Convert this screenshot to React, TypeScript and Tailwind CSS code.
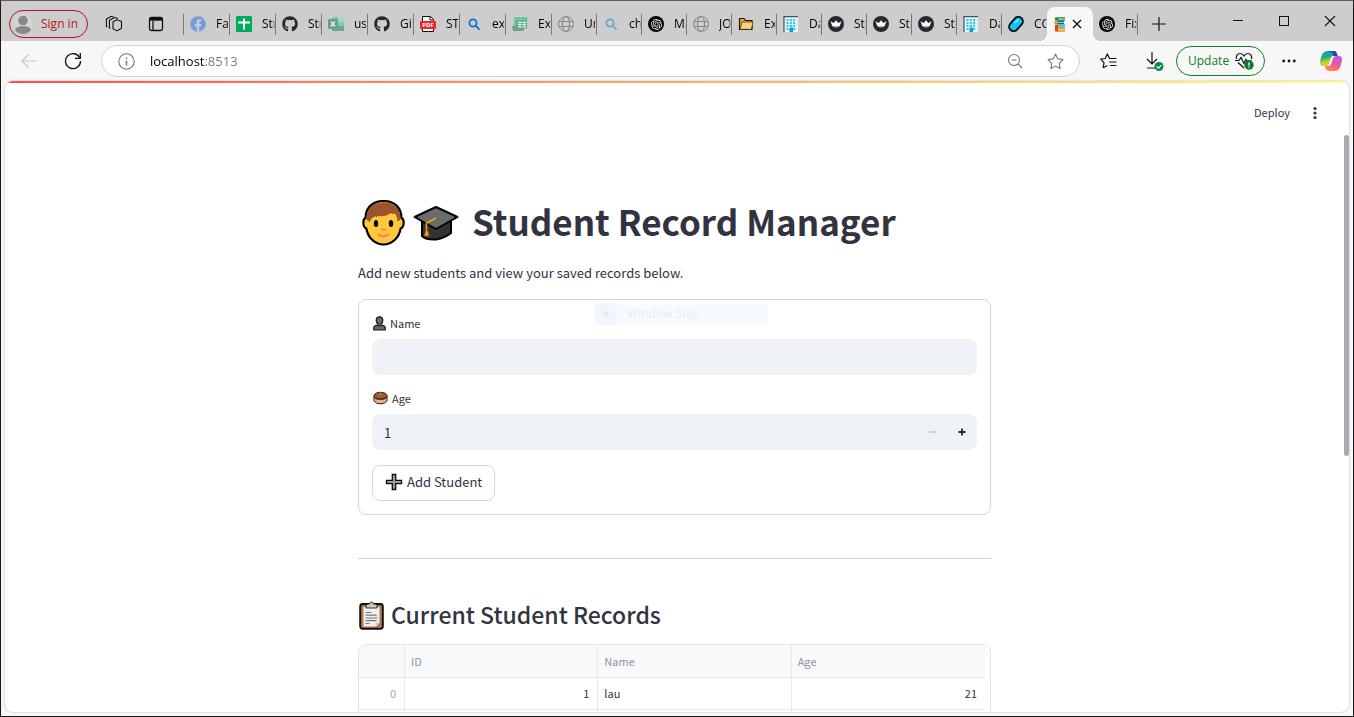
import React, { useState } from 'react';
import { FaFacebook, FaGithub } from 'react-icons/fa';
import { SiOpenai } from 'react-icons/si';

const ui = "font-['Open_Sans','Noto_Sans',sans-serif]";
const app = "font-['Noto_Sans_CJK_SC','Open_Sans',sans-serif]";

function Sheets() {
  return (
    <svg width="16" height="16" viewBox="0 0 16 16" aria-hidden="true">
      <rect width="16" height="16" rx="1" fill="#00ac5b" />
      <path d="M2 6.5h12M8 2.5v11" stroke="#fff" strokeWidth="2" />
    </svg>
  );
}

function Excel() {
  return (
    <svg width="16" height="16" viewBox="0 0 16 16" opacity="0.65" aria-hidden="true">
      <path d="M4 1h12v14H4z" fill="#5fc79a" />
      <path d="M10 1h6v5h-6z" fill="#8fe0bd" />
      <path d="M4 10h12v5H4z" fill="#3c8f68" />
      <rect x="0" y="3" width="10" height="10" rx="1" fill="#2f8a5d" />
      <path d="M3 5.5l4 5M7 5.5l-4 5" stroke="#fff" strokeWidth="1.4" />
    </svg>
  );
}

function Pdf() {
  return (
    <svg width="16" height="16" viewBox="0 0 16 16" aria-hidden="true">
      <path d="M2.5.5h8l3 3v12h-11z" fill="#fff" stroke="#111" />
      <path d="M10 .5V4h3.5" fill="none" stroke="#111" />
      <rect x="0" y="5" width="16" height="8" rx="1" fill="#f8202c" />
      <text x="8" y="11.2" fontSize="6" fontWeight="700" textAnchor="middle" fill="#fff" fontFamily="Open Sans">PDF</text>
    </svg>
  );
}

function Lens({ color }: { color: string }) {
  return (
    <svg width="16" height="16" viewBox="0 0 16 16" fill="none" stroke={color} strokeWidth="1.8" aria-hidden="true">
      <circle cx="7" cy="7" r="3.6" />
      <path d="M9.6 9.6l3.500 3.500" strokeLinecap="round" />
    </svg>
  );
}

function FormSheet() {
  return (
    <svg width="16" height="16" viewBox="0 0 16 16" aria-hidden="true">
      <path d="M2.5 1H15.500l-1 11H1.500z" fill="#6cc4a1" />
      <path d="M0 10h13l-1.500 5H1z" fill="#7d9c8a" />
      <rect x="4.500" y="4.500" width="10.500" height="8" fill="#5aa982" />
      <path d="M6 6.500h3.500M10.500 6.500H14M6 8.700h3.500M10.500 8.700H14M6 10.900h3.500M10.500 10.900H14" stroke="#e9fff5" strokeWidth="1.3" />
    </svg>
  );
}

function Globe() {
  return (
    <svg width="16" height="16" viewBox="0 0 16 16" fill="none" stroke="#858585" aria-hidden="true">
      <circle cx="8" cy="8" r="7.4" />
      <ellipse cx="8" cy="8" rx="3.6" ry="7.4" />
      <path d="M1 5.5h14M1 10.5h14" />
    </svg>
  );
}

function OpenAI() {
  return (
    <span className="flex size-4 items-center justify-center rounded-full bg-black text-white">
      <SiOpenai size={11} />
    </span>
  );
}

function Folder() {
  return (
    <svg width="16" height="16" viewBox="0 0 16 16" aria-hidden="true">
      <path d="M1.500 13.500v-11h4.500l1.500 2h6.500v9z" fill="#e8a92c" stroke="#1c1408" strokeWidth="1.200" strokeLinejoin="round" />
      <path d="M2 13.300L4 6h11l-1.600 7.300z" fill="#ffd277" stroke="#3a2a08" strokeWidth=".7" />
    </svg>
  );
}

function Building() {
  return (
    <svg width="16" height="16" viewBox="0 0 16 16" aria-hidden="true">
      <rect x="1" y=".5" width="14" height="15.500" fill="#eef1f3" />
      <path d="M.5.700h14.500M1 .5V16" stroke="#18384a" strokeWidth="1" />
      <path d="M3.500 4h10M3.500 7h10M3.500 10h10M3.500 13h10" stroke="#12d0fb" strokeWidth="2" strokeDasharray="2 1.300" />
      <path d="M6.500 16v-4.500h3.500V16z" fill="#0a9fd0" />
    </svg>
  );
}

function Crown() {
  return (
    <svg width="16" height="16" viewBox="0 0 16 16" aria-hidden="true">
      <circle cx="8" cy="8" r="8" fill="#262730" />
      <path d="M2.500 5.300l3.200 1.800L8 4.300l2.300 2.800 3.200-1.800-1.700 4.400Q8 11.200 4.200 9.700z" fill="#fff" />
      <path d="M4.200 9.700Q8 11.200 11.800 9.700l-.5 1.100Q8 12 4.700 10.800z" fill="#c4c4c8" />
    </svg>
  );
}

function Capsule() {
  return (
    <svg width="16" height="16" viewBox="0 0 16 16" aria-hidden="true">
      <rect x="0" y="3.500" width="16" height="9" rx="4.500" transform="rotate(-48 8 8)" fill="#0fc3fb" stroke="#06141f" strokeWidth="2" />
      <path d="M7 6.500l3-2.500" stroke="#8defff" strokeWidth="1.600" strokeLinecap="round" />
    </svg>
  );
}

function Books() {
  return (
    <svg width="16" height="16" viewBox="0 0 16 16" aria-hidden="true">
      <path d="M4 2.800h8M3 6.400h9M4 10h8M4 13.600h8" stroke="#e4ecec" strokeWidth="2" />
      <path d="M13 1.800H5M5 4.200h8" stroke="#16873f" strokeWidth="1.300" />
      <path d="M12 5.600H4M4 7.600h8" stroke="#1d5f94" strokeWidth="1.200" />
      <path d="M13 9.200H5M5 11.200h8" stroke="#1fa59b" strokeWidth="1.200" />
      <path d="M13 12.900H5M5 15h8" stroke="#e9981b" strokeWidth="1.300" />
      <path d="M4.500 1.500v3" stroke="#16873f" strokeWidth="3" />
      <path d="M4 5v3.500" stroke="#e9981b" strokeWidth="3" />
      <path d="M4.500 9v6.500" stroke="#ef3d1c" strokeWidth="3" />
    </svg>
  );
}

type TabItem = { icon: React.ReactNode; label: string; wide?: boolean };

const tabs: TabItem[] = [
  { icon: <FaFacebook size={16} color="#769ce0" />, label: 'Fac', wide: true },
  { icon: <Sheets />, label: 'Str', wide: true },
  { icon: <FaGithub size={16} color="#24292f" />, label: 'Str', wide: true },
  { icon: <Excel />, label: 'us', wide: true },
  { icon: <FaGithub size={16} color="#24292f" />, label: 'Git', wide: true },
  { icon: <Pdf />, label: 'ST', wide: true },
  { icon: <Lens color="#0f77c9" />, label: 'ex', wide: true },
  { icon: <FormSheet />, label: 'Exc', wide: true },
  { icon: <Globe />, label: 'Un' },
  { icon: <Lens color="#6ba6cd" />, label: 'ch' },
  { icon: <OpenAI />, label: 'Ma' },
  { icon: <Globe />, label: 'JO' },
  { icon: <Folder />, label: 'Ex' },
  { icon: <Building />, label: 'Da' },
  { icon: <Crown />, label: 'Str' },
  { icon: <Crown />, label: 'Str' },
  { icon: <Crown />, label: 'Str' },
  { icon: <Building />, label: 'Da' },
];

function Tab({ item, last = true }: { item: TabItem; last?: boolean }) {
  return (
    <button
      aria-label={item.label}
      className={`flex h-[21px] shrink-0 items-center overflow-hidden pl-[6px] ${item.wide ? 'w-[46px]' : 'w-[45px]'} ${last ? 'border-r border-[#777]' : ''}`}
    >
      <span className="shrink-0">{item.icon}</span>
      <span className="ml-[10px] w-3 grow overflow-hidden whitespace-nowrap text-left text-[12px] leading-[18px] [mask-image:linear-gradient(to_right,#000_85%,transparent)]">
        {item.label}
      </span>
    </button>
  );
}

function TabStrip() {
  return (
    <div className="flex h-10 shrink-0 items-center bg-[#cdcdcd] text-black">
      <button className="ml-2 mt-1.5 flex h-7 w-[79px] shrink-0 items-center gap-2 rounded-full border border-[#b8161c] pl-[3px] text-[12px] text-[#b8161c]">
        <svg width="20" height="20" viewBox="0 0 20 20" aria-hidden="true">
          <circle cx="10" cy="10" r="10" fill="#d8d4d2" />
          <circle cx="10" cy="6.500" r="4.800" fill="#8a8886" />
          <path d="M2 16q1-4 8-4t8 4q-3 4-8 4t-8-4z" fill="#8a8886" />
        </svg>
        <span className="whitespace-nowrap">Sign in</span>
      </button>
      <button aria-label="Workspaces" className="ml-[17px] mt-1.5 shrink-0">
        <svg width="18" height="18" viewBox="0 0 18 18" fill="none" stroke="#111" strokeWidth="1.100" strokeLinejoin="round" strokeLinecap="round" aria-hidden="true">
          <path d="M8 7.200q0-.5.500-.7l3.300-1.400q.7-.3 1.300 0L16.500 6.600v6.200q0 .6-.5.900l-3.700 1.900q-.5.300-1 0L8 13.700z" />
          <path d="M5 13.300l-.6-.4V5.800q0-.6.500-.9L9.300 2.700q.6-.3 1.200 0l2 .9" />
          <path d="M2 12l-.6-.4V4.600q0-.6.500-.9L6 1.500q.6-.3 1.200 0l1 .4" />
        </svg>
      </button>
      <button aria-label="Tab actions" className="ml-[25px] mt-1.5 shrink-0">
        <svg width="16" height="16" viewBox="0 0 16 16" fill="none" stroke="#111" strokeWidth="1.300" aria-hidden="true">
          <rect x="1.500" y="1.500" width="13" height="13" rx="2.200" />
          <path d="M1.500 3.200h13" strokeWidth="3" />
          <path d="M5 5v9.500" />
        </svg>
      </button>
      <div className="ml-[19px] mt-1.5 flex h-[34px] shrink-0 items-center">
        <span className="h-[21px] w-px bg-[#777]" />
        {tabs.map((t, i) => (
          <Tab key={i} item={t} />
        ))}
        <Tab item={{ icon: <Capsule />, label: 'CO' }} last={false} />
        <div className="relative flex h-[34px] w-[46px] shrink-0 items-center rounded-t-lg bg-[#f7f7f7] pl-[5px]">
          <span className="absolute -left-2 bottom-0 size-2 bg-[radial-gradient(circle_at_0_0,transparent_8px,#f7f7f7_8px)]" />
          <span className="absolute -right-2 bottom-0 size-2 bg-[radial-gradient(circle_at_100%_0,transparent_8px,#f7f7f7_8px)]" />
          <Books />
          <button aria-label="Close tab" className="p-1">
            <svg width="10" height="10" viewBox="0 0 10 10" stroke="#111" strokeWidth="1.400" aria-hidden="true">
              <path d="M1 1l8 8M9 1L1 9" />
            </svg>
          </button>
        </div>
        <Tab item={{ icon: <OpenAI />, label: 'Fix' }} />
      </div>
      <button aria-label="New tab" className="ml-[13px] mt-1.5 shrink-0">
        <svg width="16" height="16" viewBox="0 0 16 16" stroke="#111" strokeWidth="1.200" aria-hidden="true">
          <path d="M8 1v14M1 8h14" />
        </svg>
      </button>
      <div className="ml-auto mr-[17px] flex shrink-0 items-center gap-[34px]">
        <button aria-label="Minimize">
          <svg width="12" height="12" viewBox="0 0 12 12" stroke="#111" aria-hidden="true"><path d="M1 5.500h10" /></svg>
        </button>
        <button aria-label="Maximize">
          <svg width="12" height="12" viewBox="0 0 12 12" fill="none" stroke="#111" aria-hidden="true"><rect x="1.500" y="1.500" width="9" height="9" /></svg>
        </button>
        <button aria-label="Close window">
          <svg width="12" height="12" viewBox="0 0 12 12" stroke="#111" strokeWidth="1.100" aria-hidden="true"><path d="M1 1l10 10M11 1L1 11" /></svg>
        </button>
      </div>
    </div>
  );
}

function Toolbar() {
  return (
    <div className="flex h-10 shrink-0 items-center pr-[11px]">
      <button aria-label="Back" className="ml-5 shrink-0">
        <svg width="16" height="16" viewBox="0 0 16 16" fill="none" stroke="#c6c6c6" strokeWidth="1.100" aria-hidden="true">
          <path d="M15.500 8H.8M7.500 1.500L1 8l6.500 6.500" />
        </svg>
      </button>
      <button aria-label="Refresh" className="ml-[27px] shrink-0">
        <svg width="18" height="18" viewBox="0 0 18 18" fill="none" stroke="#111" strokeWidth="1.300" aria-hidden="true">
          <path d="M15.800 6A7.500 7.500 0 1 0 16.500 9" />
          <path d="M16.300 1v5.300H11" />
        </svg>
      </button>
      <div className="ml-[19px] flex h-8 grow items-center rounded-full border border-[#d2d2d2] bg-white pl-4 pr-[15px]">
        <svg width="17" height="17" viewBox="0 0 17 17" fill="none" stroke="#767676" strokeWidth="1.100" aria-hidden="true">
          <circle cx="8.500" cy="8.500" r="7.700" />
          <path d="M8.500 7.500v5M8.500 4.500v1.500" strokeWidth="1.500" />
        </svg>
        <input
          id="address"
          aria-label="Address"
          defaultValue="localhost:8513"
          className="ml-[15px] h-6 min-w-0 grow bg-[linear-gradient(to_right,#000_55px,#777_55px)] bg-clip-text text-[13px] leading-6 text-transparent caret-black outline-none"
        />
        <button aria-label="Zoom" className="shrink-0">
          <svg width="16" height="16" viewBox="0 0 16 16" fill="none" stroke="#777" strokeWidth="1.100" aria-hidden="true">
            <circle cx="7" cy="7" r="5.500" />
            <path d="M11 11l4 4M4.500 7h5" />
          </svg>
        </button>
        <button aria-label="Favorite this page" className="ml-6 shrink-0">
          <svg width="17" height="17" viewBox="0 0 24 24" fill="none" stroke="#777" strokeWidth="1.500" strokeLinejoin="round" aria-hidden="true">
            <path d="M12 1.500l3.200 6.800 7.300 1-5.300 5.200 1.300 7.500L12 18.500 5.500 22l1.300-7.500L1.500 9.300l7.300-1z" />
          </svg>
        </button>
      </div>
      <button aria-label="Favorites" className="ml-5 shrink-0">
        <svg width="17" height="17" viewBox="0 0 17 17" fill="none" stroke="#111" strokeWidth="1.200" strokeLinejoin="round" aria-hidden="true">
          <path d="M10.500 5.500l-1-.2L7.300 1 5.200 5.500.7 6.200l3.300 3.400-.8 5.100 4.100-2.200" />
          <path d="M10 5.500h6.500M9 9h7.500M10 12.500h6.500" />
        </svg>
      </button>
      <button aria-label="Downloads" className="ml-[29px] shrink-0">
        <svg width="18" height="20" viewBox="0 0 18 20" fill="none" stroke="#111" strokeWidth="1.200" aria-hidden="true">
          <path d="M6 1v12M1 8l5 5 5-5M1 17h9" />
          <circle cx="13" cy="15.500" r="4.500" fill="#0e8a44" stroke="none" />
          <path d="M10.800 15.500l1.700 1.700 2.800-3" stroke="#fff" />
        </svg>
      </button>
      <button className="ml-3 flex h-[30px] w-[89px] shrink-0 items-center rounded-full border border-[#0f8025] pl-[11px] text-[12px] text-[#0f8025]">
        Update
        <svg className="ml-1.5" width="20" height="18" viewBox="0 0 20 18" fill="none" stroke="#111" strokeWidth="1.200" aria-hidden="true">
          <path d="M1.700 7C.500 4 2.500 1.500 5 1.500 7.500 1.500 8.600 3.300 9 4 9.400 3.300 10.500 1.500 13 1.500S17.500 4 16.300 7M3 10.500l6 5.500" />
          <path d="M0 8.500h4l2-3 3 6 2-4 1 1.500h5" />
          <circle cx="14" cy="13" r="4.700" fill="#0f7a25" stroke="none" />
          <path d="M14 10.500v3.200M14 14.500v1.200" stroke="#fff" strokeWidth="1.300" />
        </svg>
      </button>
      <button aria-label="Settings and more" className="ml-[17px] shrink-0">
        <svg width="14" height="4" viewBox="0 0 14 4" fill="#111" aria-hidden="true">
          <circle cx="1.700" cy="2" r="1.400" /><circle cx="7" cy="2" r="1.400" /><circle cx="12.300" cy="2" r="1.400" />
        </svg>
      </button>
      <button aria-label="Copilot" className="ml-6 shrink-0">
        <svg width="22" height="20" viewBox="0 0 22 20" aria-hidden="true">
          <defs>
            <linearGradient id="cpA" x1="0" y1="0" x2="0.300" y2="1">
              <stop offset="0" stopColor="#12a6ea" /><stop offset=".45" stopColor="#22a77a" /><stop offset=".75" stopColor="#b8d338" /><stop offset="1" stopColor="#ffbe2e" />
            </linearGradient>
            <linearGradient id="cpB" x1="0.800" y1="0" x2="0.200" y2="1">
              <stop offset="0" stopColor="#b05cf0" /><stop offset=".5" stopColor="#f2569a" /><stop offset="1" stopColor="#ff8d45" />
            </linearGradient>
          </defs>
          <path d="M8 0h6q2 0 2.700 2l1 3h-4q-2 0-2.700 2l-2 6q-.7 2-3 2H3Q0 15 0 11.500q0-2 1.500-6.500Q3 0 8 0z" fill="url(#cpA)" />
          <path d="M7 0h7q2 0 2.700 2l1 3h-4L12 1.500z" fill="#1848c8" />
          <path d="M14 20H9q-2.500 0-3.200-2l-1-3H8q2 0 2.700-2l2-6q.7-2 3-2H19q3 0 3 3.500 0 2-1.500 6.500Q19 20 14 20z" fill="url(#cpB)" />
          <path d="M9 13.500L11.200 7q.7-2 2.800-2h1.500q-1.800 0-2.500 2l-2 6q-.7 2-2.700 2H7.500q1 0 1.500-1.500z" fill="#fff" />
        </svg>
      </button>
    </div>
  );
}

function FaceIcon() {
  return (
    <svg width="43" height="46" viewBox="0 0 43 46" aria-hidden="true">
      <path d="M21.500 1C9.500 1 3.500 9 3.500 18c-3 1-3 9 .8 10.500C6 38 13 44.500 21.500 44.500S37 38 38.700 28.500c3.800-1.500 3.800-9.500.8-10.500 0-9-6-17-18-17z" fill="#ffc83d" stroke="#000" strokeWidth="2.200" />
      <path d="M4.800 20C3.500 9 11 2.200 21.500 2.200S39.500 9 38.200 20l-3 1.500q.5-4-2-8-2 1-5-.5-4 4-12.500 3l-1 1.500-1-1.300q-4.500 1-6 5.800z" fill="#99562d" />
      <ellipse cx="14" cy="23.500" rx="2.200" ry="3.600" fill="#000" />
      <ellipse cx="29" cy="23.500" rx="2.200" ry="3.600" fill="#000" />
      <path d="M19.500 29.500h4.500" stroke="#ff8b3d" strokeWidth="2" strokeLinecap="round" />
      <path d="M16.500 34.500q5 3.500 10 0" fill="none" stroke="#ff8257" strokeWidth="2.400" strokeLinecap="round" />
    </svg>
  );
}

function CapIcon() {
  return (
    <svg width="46" height="36" viewBox="0 0 46 36" aria-hidden="true">
      <path d="M9 14v17q4 4 14 3.500 9-1.500 15-6.500V14z" fill="#333" stroke="#000" strokeWidth="2" strokeLinejoin="round" />
      <path d="M23 2l21.500 10L23 24 1.500 12z" fill="#6b6b6b" stroke="#000" strokeWidth="2" strokeLinejoin="round" />
      <path d="M23 13L13.500 18v9" fill="none" stroke="#f4a11d" strokeWidth="1.600" />
      <path d="M12.500 26h2.500l1 5h-4.500z" fill="#f4a11d" stroke="#a55d0b" strokeWidth=".7" />
    </svg>
  );
}

function PersonIcon() {
  return (
    <svg width="13" height="15" viewBox="0 0 13 15" aria-hidden="true">
      <path d="M.8 14v-2.500Q1 9.500 5 9.200V8Q3.200 7 3.200 4.200 3.300.8 6.500.8t3.300 3.400Q9.800 7 8 8v1.200q4 .3 4.200 2.300V14z" fill="#6a6a6a" stroke="#161616" strokeWidth="1.200" />
      <path d="M4.500 9.500q2 1.300 4 0" stroke="#222" fill="none" />
    </svg>
  );
}

function CakeIcon() {
  return (
    <svg width="15" height="14" viewBox="0 0 16 14" aria-hidden="true">
      <path d="M1 5v5q2 3.300 7 3.300t7-3.300V5z" fill="#e3b595" stroke="#2a1710" strokeWidth="1" />
      <path d="M1.500 5v2.500q3 2 6.500 1.700 3.500.3 6.500-1.700V5z" fill="#8a4a2b" />
      <ellipse cx="8" cy="4.500" rx="7" ry="3.600" fill="#a9562d" stroke="#2a1710" />
      <path d="M8 1v4" stroke="#35a89a" strokeWidth="1.600" />
      <path d="M4 4h1M11 4h1.500M6 6h1M9.500 6.200h1" stroke="#e5502f" />
    </svg>
  );
}

function ClipboardIcon() {
  return (
    <svg width="25" height="29" viewBox="0 0 25 29" aria-hidden="true">
      <rect x="1.200" y="3" width="22.600" height="24.800" rx="2.500" fill="#b9794c" stroke="#0d0d0d" strokeWidth="1.900" />
      <path d="M4.500 6h16v16l-3.500 3.500H4.500z" fill="#f1f1f1" />
      <path d="M20.500 21.500h-4v4z" fill="#c9c9c9" />
      <path d="M7 7V4.500q0-1 2-1.500h1.500Q11 .9 12.500.9T14.500 3H16q2 .5 2 1.500V7z" fill="#c9c9c9" stroke="#0d0d0d" strokeWidth=".8" />
      <path d="M6.500 11.500h6M6.500 14.200h11M6.500 17h12M6.500 19.700h11M6.500 22.500h4" stroke="#757575" strokeWidth="1.200" />
    </svg>
  );
}

function StudentForm() {
  const [age, setAge] = useState('1');
  const label = 'flex h-5 items-center gap-1 pl-px text-[11px] leading-5';
  return (
    <form onSubmit={(e) => e.preventDefault()} className="relative mt-[15px] rounded-lg border border-[#d5d6d8] p-[13px]">
      <div aria-hidden="true" className="absolute left-[236px] top-[3px] flex h-[22px] w-[173px] items-center bg-[#f6fbff]">
        <span className="flex h-full w-[22px] items-center justify-center bg-[#f0f7ff]">
          <span className="size-1.5 rounded-full bg-[#e9ecee]" />
        </span>
        <span className={`ml-[10px] text-[12px] text-[#ebebeb] ${ui}`}>Window Snip</span>
      </div>
      <label htmlFor="name" className={label}>
        <PersonIcon />
        Name
      </label>
      <input id="name" type="text" className="mt-1.5 block h-9 w-full rounded-lg bg-[#eef1f6] px-3 text-[13px] outline-none" />
      <label htmlFor="age" className={`mt-[13px] ${label}`}>
        <CakeIcon />
        Age
      </label>
      <div className="mt-1.5 flex h-9 items-center overflow-hidden rounded-lg bg-[#eef1f6]">
        <input id="age" inputMode="numeric" value={age} onChange={(e) => setAge(e.target.value)} className="h-9 min-w-0 grow bg-transparent px-3 text-[13px] outline-none" />
        <button type="button" aria-label="Decrease age" disabled className="flex h-9 w-[29px] items-center justify-center">
          <svg width="8" height="8" viewBox="0 0 8 8" aria-hidden="true"><path d="M.5 4h7" stroke="#cfd3de" strokeWidth="1.800" /></svg>
        </button>
        <button type="button" aria-label="Increase age" className="mr-px flex h-9 w-[29px] items-center justify-center">
          <svg width="8" height="8" viewBox="0 0 8 8" aria-hidden="true"><path d="M.5 4h7M4 .5v7" stroke="#262730" strokeWidth="1.800" /></svg>
        </button>
      </div>
      <button type="submit" className="mt-[15px] flex h-9 items-center gap-1 rounded-lg border border-[#d5d6d8] bg-white px-3 pb-0.5 text-[13px]">
        <svg width="18" height="18" viewBox="0 0 18 18" aria-hidden="true">
          <path d="M7.300 1.500h3.400v5.800h5.800v3.400h-5.800v5.800H7.300v-5.800H1.500V7.300h5.800z" fill="#9c9c9c" stroke="#0d0d0d" strokeWidth="1.300" />
        </svg>
        Add Student
      </button>
    </form>
  );
}

function Records() {
  const edge = 'border-b border-[#e7e8ec] pl-[6px] pr-2';
  const cell = `${edge} border-r`;
  return (
    <div className="mt-[13px] h-40 overflow-hidden rounded-lg border border-[#e4e5e9] pr-[5px]">
      <table className="w-full table-fixed border-separate border-spacing-0 text-[11px]">
        <colgroup>
          <col className="w-[46px]" />
          <col />
          <col />
          <col />
        </colgroup>
        <thead>
          <tr className="h-[33px] bg-[#f8f9fb] text-left text-[#8f929d]">
            <th className={cell} aria-label="Index" />
            <th className={`${cell} font-normal`}>ID</th>
            <th className={`${cell} font-normal`}>Name</th>
            <th className={`${edge} font-normal`}>Age</th>
          </tr>
        </thead>
        <tbody>
          <tr className="h-8">
            <td className={`${cell} text-right text-[#a3a6b0]`}>0</td>
            <td className={`${cell} text-right`}>1</td>
            <td className={cell}>lau</td>
            <td className={`${edge} text-right`}>21</td>
          </tr>
          <tr className="h-8">
            <td className={cell} />
            <td className={cell} />
            <td className={cell} />
            <td className={edge} />
          </tr>
        </tbody>
      </table>
    </div>
  );
}

export default function App() {
  return (
    <div className={`flex h-screen flex-col overflow-hidden border border-[#1a1a1c] border-t-[#5f5d60] bg-[#f7f7f7] ${ui}`}>
      <TabStrip />
      <Toolbar />
      <div className={`mx-1 mb-1 flex min-h-0 grow flex-col overflow-hidden rounded-lg bg-white text-[#31333f] shadow-[0_0_2px_rgba(0,0,0,0.3)] ${app}`}>
        <div className="h-0.5 shrink-0 bg-linear-to-r from-[#ff4b4b] to-[#fffd80]" />
        <header className="flex h-[52px] shrink-0 items-center justify-end gap-[22px] pr-[31px] pt-2">
          <button className="pb-0.5 text-[11px] leading-5">Deploy</button>
          <button aria-label="Main menu">
            <svg width="6" height="14" viewBox="0 0 6 14" fill="#31333f" aria-hidden="true">
              <circle cx="3" cy="2.500" r="1.600" /><circle cx="3" cy="7" r="1.600" /><circle cx="3" cy="11.500" r="1.600" />
            </svg>
          </button>
        </header>
        <div className="flex min-h-0 grow">
          <main className="min-w-0 grow overflow-y-auto [scrollbar-width:none]">
            <div className="mx-auto w-full max-w-[633px] pt-16">
              <h1 className="flex h-12 items-center whitespace-nowrap text-[35px] font-bold leading-[42px]">
                <span className="ml-1 flex items-center gap-2">
                  <FaceIcon />
                  <CapIcon />
                </span>
                <span className="ml-[13px] pb-1">Student Record Manager</span>
              </h1>
              <p className="mt-[14px] text-[13px] leading-[23px]">Add new students and view your saved records below.</p>
              <StudentForm />
              <hr className="mt-[43px] border-[#d5d6d8]" />
              <h3 className="mt-10 flex h-8 items-center gap-[7px] pl-px text-[23px] font-medium leading-8">
                <ClipboardIcon />
                <span className="pb-0.5">Current Student Records</span>
              </h3>
              <Records />
            </div>
          </main>
          <div className="w-[5px] shrink-0">
            <div className="h-[321px] w-[5px] rounded-sm bg-[#a9aaad]" />
          </div>
        </div>
      </div>
    </div>
  );
}
